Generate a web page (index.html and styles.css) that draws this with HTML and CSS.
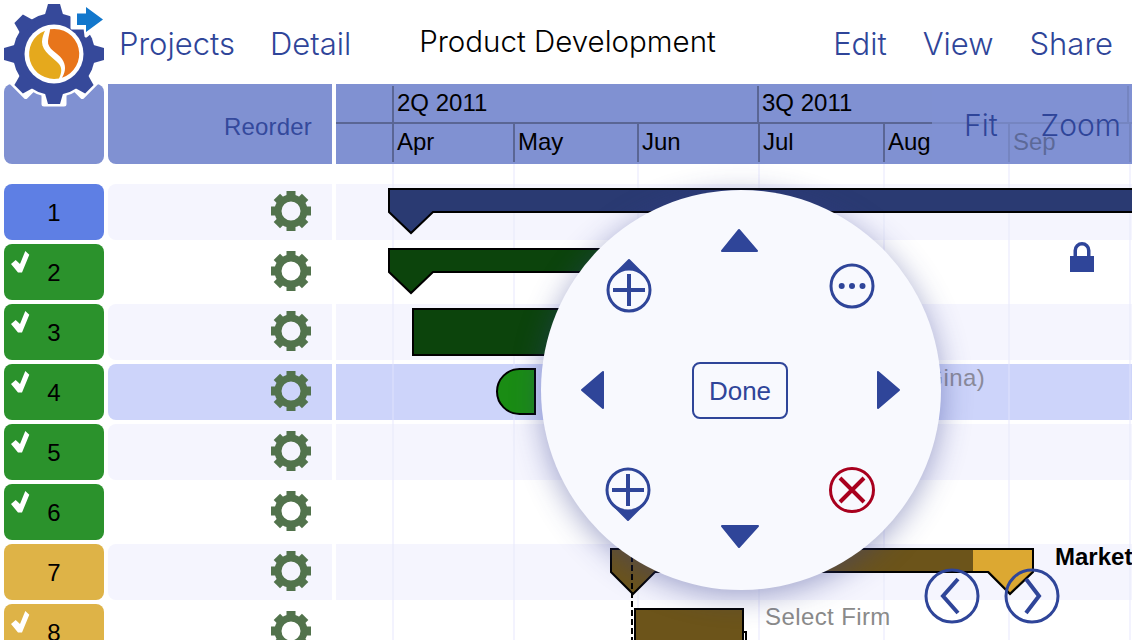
FILE: index.html
```html
<!DOCTYPE html>
<html lang="en">
<head>
    <meta charset="UTF-8">
    <title>Product Development</title>
    <link rel="stylesheet" href="styles.css">
</head>
<body>
    <svg class="defs" width="0" height="0">
        <defs>
            <symbol id="cog" viewBox="-21 -21 42 42">
                <circle r="13" fill="none" stroke="currentColor" stroke-width="7"/>
                <g fill="currentColor">
                    <rect x="-4.5" y="-20" width="9" height="6"/>
                    <rect x="-4.5" y="-20" width="9" height="6" transform="rotate(45)"/>
                    <rect x="-4.5" y="-20" width="9" height="6" transform="rotate(90)"/>
                    <rect x="-4.5" y="-20" width="9" height="6" transform="rotate(135)"/>
                    <rect x="-4.5" y="-20" width="9" height="6" transform="rotate(180)"/>
                    <rect x="-4.5" y="-20" width="9" height="6" transform="rotate(225)"/>
                    <rect x="-4.5" y="-20" width="9" height="6" transform="rotate(270)"/>
                    <rect x="-4.5" y="-20" width="9" height="6" transform="rotate(315)"/>
                </g>
            </symbol>
            <symbol id="tick" viewBox="0 0 20 23">
                <polygon points="1,14 5.7,10 10,14 15.3,1 19.3,4.7 12,22.6 8,22.6" fill="#fff"/>
            </symbol>
        </defs>
    </svg>

    <div class="app">
        <nav class="topbar">
            <a class="nav-link">Projects</a>
            <a class="nav-link">Detail</a>
            <span class="title">Product Development</span>
            <div class="nav-right">
                <a class="nav-link">Edit</a>
                <a class="nav-link">View</a>
                <a class="nav-link">Share</a>
            </div>
        </nav>

        <div class="row head">
            <div class="cell-num head-cell"></div>
            <div class="cell-task head-cell"><span class="reorder">Reorder</span></div>
            <div class="timeline">
                <div class="quarters">
                    <div class="quarter q2">2Q 2011</div>
                    <div class="quarter q3">3Q 2011</div>
                    <div class="quarter q4"></div>
                </div>
                <div class="months">
                    <div class="month m-apr">Apr</div>
                    <div class="month m-may">May</div>
                    <div class="month m-jun">Jun</div>
                    <div class="month m-jul">Jul</div>
                    <div class="month m-aug">Aug</div>
                    <div class="month m-sep">Sep</div>
                    <div class="month m-oct"></div>
                </div>
                <div class="fit-zoom">
                    <span class="fit">Fit</span>
                    <span class="zoom">Zoom</span>
                </div>
            </div>
        </div>

        <div class="rows">
            <div class="row alt">
                <div class="cell-num blue">1</div>
                <div class="cell-task"><svg class="cog"><use href="#cog"/></svg></div>
                <div class="lane">
                    <svg class="bar" style="left:52px;top:3px;width:744px;height:52px"><polygon points="1,2 800,2 800,25 45,25 23,46 1,25" fill="#2a3a72" stroke="#000" stroke-width="2"/></svg>
                </div>
            </div>
            <div class="row">
                <div class="cell-num green"><svg class="tick"><use href="#tick"/></svg>2</div>
                <div class="cell-task"><svg class="cog"><use href="#cog"/></svg></div>
                <div class="lane">
                    <svg class="bar" style="left:52px;top:3px;width:300px;height:52px"><polygon points="1,2 300,2 300,25 45,25 23,46 1,25" fill="#0c440c" stroke="#000" stroke-width="2"/></svg>
                    <svg class="lock" viewBox="0 0 24 30"><path d="M0 14h24v16H0z M3.5 14v-5.5a8.5 8.5 0 0 1 17 0v5.5h-3.5v-5.5a5 5 0 0 0-10 0v5.5z" fill="#2f4599"/></svg>
                </div>
            </div>
            <div class="row alt">
                <div class="cell-num green"><svg class="tick"><use href="#tick"/></svg>3</div>
                <div class="cell-task"><svg class="cog"><use href="#cog"/></svg></div>
                <div class="lane">
                    <div class="bar-rect task-dark"></div>
                </div>
            </div>
            <div class="row selected">
                <div class="cell-num green"><svg class="tick"><use href="#tick"/></svg>4</div>
                <div class="cell-task"><svg class="cog"><use href="#cog"/></svg></div>
                <div class="lane">
                    <div class="bar-rect task-green"></div>
                    <span class="bar-label gina">(Gina)</span>
                </div>
            </div>
            <div class="row alt">
                <div class="cell-num green"><svg class="tick"><use href="#tick"/></svg>5</div>
                <div class="cell-task"><svg class="cog"><use href="#cog"/></svg></div>
                <div class="lane"></div>
            </div>
            <div class="row">
                <div class="cell-num green"><svg class="tick"><use href="#tick"/></svg>6</div>
                <div class="cell-task"><svg class="cog"><use href="#cog"/></svg></div>
                <div class="lane"></div>
            </div>
            <div class="row alt">
                <div class="cell-num gold">7</div>
                <div class="cell-task"><svg class="cog"><use href="#cog"/></svg></div>
                <div class="lane">
                    <svg class="bar" style="left:274px;top:3px;width:430px;height:52px">
                        <polygon points="1,2 423,2 423,25 400,47 378,25 45,25 23,47 1,25" fill="#6c541a" stroke="#000" stroke-width="2"/>
                        <polygon points="363,3 422,3 422,24 400,45 379,24 363,24" fill="#dca832"/>
                    </svg>
                    <span class="bar-label market">Market</span>
                </div>
            </div>
            <div class="row">
                <div class="cell-num gold"><svg class="tick"><use href="#tick"/></svg>8</div>
                <div class="cell-task"><svg class="cog"><use href="#cog"/></svg></div>
                <div class="lane">
                    <div class="bar-rect task-stub"></div>
                    <div class="bar-rect task-brown"></div>
                    <span class="bar-label firm">Select Firm</span>
                </div>
            </div>
            <div class="link-line"></div>
        </div>

        <svg class="logo" viewBox="0 0 110 110">
            <g transform="translate(54 54)">
                <g fill="#fff" stroke="#fff" stroke-width="5" stroke-linejoin="round">
                    <circle r="41"/>
                    <rect x="-10" y="-50" width="20" height="14"/>
                    <rect x="-10" y="-50" width="20" height="14" transform="rotate(45)"/>
                    <rect x="-10" y="-50" width="20" height="14" transform="rotate(90)"/>
                    <rect x="-10" y="-50" width="20" height="14" transform="rotate(135)"/>
                    <rect x="-10" y="-50" width="20" height="14" transform="rotate(180)"/>
                    <rect x="-10" y="-50" width="20" height="14" transform="rotate(225)"/>
                    <rect x="-10" y="-50" width="20" height="14" transform="rotate(270)"/>
                    <rect x="-10" y="-50" width="20" height="14" transform="rotate(315)"/>
                </g>
                <g fill="#36499a">
                    <circle r="41"/>
                    <path d="M-6 -50h12l4 14h-20z"/>
                    <path d="M-6 -50h12l4 14h-20z" transform="rotate(45)"/>
                    <path d="M-6 -50h12l4 14h-20z" transform="rotate(90)"/>
                    <path d="M-6 -50h12l4 14h-20z" transform="rotate(135)"/>
                    <path d="M-6 -50h12l4 14h-20z" transform="rotate(180)"/>
                    <path d="M-6 -50h12l4 14h-20z" transform="rotate(225)"/>
                    <path d="M-6 -50h12l4 14h-20z" transform="rotate(270)"/>
                    <path d="M-6 -50h12l4 14h-20z" transform="rotate(315)"/>
                </g>
                <circle r="29.5" fill="#fff"/>
                <path d="M-9 -23.3A25 25 0 0 0 5 24.5C8 18 8 14 5 10C0 4 -12 -2 -12 -12C-12 -17 -10 -21 -9 -23.3Z" fill="#e5a91d"/>
                <path d="M-4 -24.7A25 25 0 0 1 8 23.7C12 17 12 11 8 5C4 -1 -7 -5 -6 -13C-5.5 -18 -4 -22 -4 -24.7Z" fill="#e8751b"/>
            </g>
            <path d="M83 3 L106 19 L86 36 L85 28 L72 28 L72 10 L83 10Z" fill="#fff" stroke="#fff" stroke-width="3" stroke-linejoin="round"/>
            <path d="M86 7 L103 19.5 L86 32 L86 25 L77 25 L77 13.5 L86 13.5Z" fill="#1277cc"/>
        </svg>

        <div class="radial">
            <svg class="radial-icons" viewBox="0 0 400 400">
                <g fill="#2f4599" stroke="#2f4599" stroke-width="2" stroke-linejoin="round">
                    <polygon points="198,40 181,61 216,61"/>
                    <polygon points="198,357 181,336 217,336"/>
                    <polygon points="41,200 62,182 62,218"/>
                    <polygon points="358,200 337,182 337,218"/>
                    <polygon points="88,70 71,87 105,87"/>
                    <polygon points="87,330 70,313 104,313"/>
                </g>
                <g fill="#f8f9fe" stroke="#2f4599" stroke-width="3">
                    <circle cx="88" cy="100" r="21"/>
                    <circle cx="87" cy="300" r="21"/>
                    <circle cx="311" cy="96" r="21"/>
                </g>
                <g stroke="#2f4599" stroke-width="4">
                    <path d="M72 100h32M88 84v32"/>
                    <path d="M71 300h32M87 284v32"/>
                </g>
                <g fill="#2f4599">
                    <circle cx="300.7" cy="96" r="3"/>
                    <circle cx="311" cy="96" r="3"/>
                    <circle cx="321.5" cy="96" r="3"/>
                </g>
                <circle cx="311" cy="300" r="21.5" fill="none" stroke="#a8001e" stroke-width="3"/>
                <path d="M299 288l24 24M323 288l-24 24" stroke="#a8001e" stroke-width="4" fill="none"/>
            </svg>
            <button class="done">Done</button>
        </div>

        <svg class="pager" viewBox="0 0 140 60">
            <g fill="none" stroke="#2f4599" stroke-width="3">
                <circle cx="28" cy="28" r="26"/>
                <circle cx="108" cy="28" r="26"/>
                <g stroke-width="4">
                    <path d="M34 11L19 28L34 45"/>
                    <path d="M102 11L115 28L102 45"/>
                </g>
            </g>
        </svg>
    </div>
</body>
</html>
```

FILE: styles.css
```css
* {
    box-sizing: border-box;
}
html, body {
    margin: 0;
    height: 100%;
}
body {
    background: white;
    font-family: 'Liberation Sans', Arial, sans-serif;
    overflow: hidden;
}
.defs {
    position: absolute;
}
.app {
    position: relative;
    width: 1136px;
    height: 640px;
    overflow: hidden;
}

/* top bar */
.topbar {
    display: flex;
    align-items: center;
    height: 84px;
    padding: 3px 23px 0 119px;
    gap: 35px;
}
.nav-link {
    font-family: Inter, sans-serif;
    font-weight: 300;
    font-size: 31px;
    color: #2f4599;
}
.title {
    margin: -6px 0 0 33px;
    font-family: Inter, sans-serif;
    font-weight: 300;
    font-size: 29.5px;
    color: #000;
}
.nav-right {
    display: flex;
    gap: 36px;
    margin-left: auto;
}

/* table */
.row {
    display: grid;
    grid-template-columns: 100px 224px 796px;
    gap: 4px;
    padding-left: 4px;
    height: 56px;
}
.rows {
    --grid: #f3f3fe;
    display: flex;
    flex-direction: column;
    gap: 4px;
    padding-top: 20px;
    position: relative;
    background-image:
        linear-gradient(var(--grid), var(--grid)), linear-gradient(var(--grid), var(--grid)),
        linear-gradient(var(--grid), var(--grid)), linear-gradient(var(--grid), var(--grid)),
        linear-gradient(var(--grid), var(--grid)), linear-gradient(var(--grid), var(--grid)),
        linear-gradient(var(--grid), var(--grid));
    background-size: 2px 100%;
    background-repeat: no-repeat;
    background-position: 392px 0, 513px 0, 637px 0, 758px 0, 883px 0, 1008px 0, 1129px 0;
}
.head {
    height: 80px;
}
.head-cell {
    background: #8091d2;
    border-radius: 0 0 8px 8px;
}
.cell-task.head-cell {
    border-radius: 0 0 0 8px;
    background: #8091d2;
}
.reorder {
    font-size: 24px;
    letter-spacing: 0.2px;
    color: #34499c;
    margin-top: 6px;
}
.cell-num {
    position: relative;
    display: flex;
    align-items: center;
    justify-content: center;
    padding-top: 2px;
    border-radius: 8px;
    font-size: 24px;
    color: #000;
}
.blue { background: #5e7fe4; }
.green { background: #2b922c; }
.gold { background: #deb347; }
.cell-task {
    display: flex;
    align-items: center;
    justify-content: flex-end;
    padding-right: 20px;
    border-radius: 8px 0 0 8px;
}
.alt .cell-task { background: #f5f5fe; }
.selected .cell-task { background: #cdd4fa; }
.cog {
    width: 42px;
    height: 42px;
    margin-top: -2px;
    color: #52734c;
}
.tick {
    position: absolute;
    left: 6px;
    top: 6px;
    width: 20px;
    height: 23px;
}

/* timeline header */
.timeline {
    position: relative;
    background: #8091d2;
    font-size: 24px;
    color: #000;
}
.quarters {
    display: flex;
    height: 40px;
    padding: 2px 0 0 56px;
    border-bottom: 2px solid #5a6694;
}
.quarter {
    border-left: 2px solid #5a6694;
    padding: 2px 0 0 3px;
    line-height: 30px;
    white-space: nowrap;
}
.q2 { width: 366px; }
.q3 { width: 371px; }
.q4 { width: 3px; }
.months {
    display: flex;
    height: 38px;
    padding-left: 56px;
}
.month {
    border-left: 2px solid #5a6694;
    padding: 1px 0 0 3px;
    line-height: 34px;
}
.m-apr { width: 121px; }
.m-may { width: 124px; }
.m-jun { width: 121px; }
.m-jul { width: 125px; }
.m-aug { width: 125px; }
.m-sep { width: 121px; }
.m-oct { width: 3px; padding: 0; }
.fit-zoom {
    position: absolute;
    left: 596px;
    right: 0;
    top: 0;
    bottom: 0;
    padding: 26px 11px 0 32px;
    display: flex;
    justify-content: space-between;
    background: rgba(128, 145, 210, 0.72);
    font-family: Inter, sans-serif;
    font-weight: 300;
    font-size: 30px;
    color: #2f4599;
}
.fit-zoom span {
    line-height: 30px;
}

/* gantt lanes */
.lane {
    --grid: #eeeffc;
    position: relative;
    background-image:
        linear-gradient(var(--grid), var(--grid)), linear-gradient(var(--grid), var(--grid)),
        linear-gradient(var(--grid), var(--grid)), linear-gradient(var(--grid), var(--grid)),
        linear-gradient(var(--grid), var(--grid)), linear-gradient(var(--grid), var(--grid)),
        linear-gradient(var(--grid), var(--grid));
    background-size: 2px 100%;
    background-repeat: no-repeat;
    background-position: 56px 0, 177px 0, 301px 0, 422px 0, 547px 0, 672px 0, 793px 0;
}
.row:not(.alt):not(.selected) .lane { --grid: #f3f3fe; }
.alt .lane { background-color: #f5f5fe; }
.selected .lane {
    --grid: #d6dbfb;
    background-color: #cdd4fa;
}
.bar {
    position: absolute;
    overflow: hidden;
}
.bar-rect {
    position: absolute;
    border: 2px solid #000;
}
.task-dark {
    left: 76px;
    top: 4px;
    width: 200px;
    height: 48px;
    background: #0c440c;
}
.task-green {
    left: 160px;
    top: 4px;
    width: 40px;
    height: 47px;
    background: #1a8c14;
    border-radius: 24px 0 0 24px;
}
.task-brown {
    left: 298px;
    top: 4px;
    width: 110px;
    height: 60px;
    background: #6c541a;
}
.task-stub {
    left: 406px;
    top: 27px;
    width: 5px;
    height: 30px;
}
.bar-label {
    position: absolute;
    font-size: 24px;
    letter-spacing: 0.4px;
    color: #8a8a8a;
    white-space: nowrap;
}
.gina {
    left: 580px;
    top: 0;
    color: #8a8a9a;
}
.market {
    left: 719px;
    top: -1px;
    width: 77px;
    overflow: hidden;
    font-weight: bold;
    letter-spacing: 0;
    color: #000;
}
.firm {
    left: 429px;
    top: -1px;
}
.lock {
    position: absolute;
    left: 734px;
    top: -2px;
    width: 24px;
    height: 30px;
}
.link-line {
    position: absolute;
    left: 631px;
    top: 392px;
    width: 2px;
    height: 84px;
    background: repeating-linear-gradient(#000 0, #000 6px, transparent 6px, transparent 9px);
}

/* overlays */
.logo {
    position: absolute;
    left: 0;
    top: 0;
    width: 110px;
    height: 110px;
}
.radial {
    position: absolute;
    left: 541px;
    top: 190px;
    width: 400px;
    height: 400px;
    border-radius: 50%;
    background: #f8f9fe;
    box-shadow: 0 6px 30px rgba(50, 60, 140, 0.45);
}
.radial-icons {
    position: absolute;
    left: 0;
    top: 0;
    width: 400px;
    height: 400px;
}
.done {
    position: absolute;
    left: 151px;
    top: 172px;
    width: 96px;
    height: 57px;
    padding: 2px 0 0;
    background: transparent;
    border: 2px solid #2f4599;
    border-radius: 8px;
    font-family: 'Liberation Sans', Arial, sans-serif;
    font-size: 26px;
    color: #2f4599;
}
.pager {
    position: absolute;
    left: 924px;
    top: 568px;
    width: 140px;
    height: 60px;
}
```
